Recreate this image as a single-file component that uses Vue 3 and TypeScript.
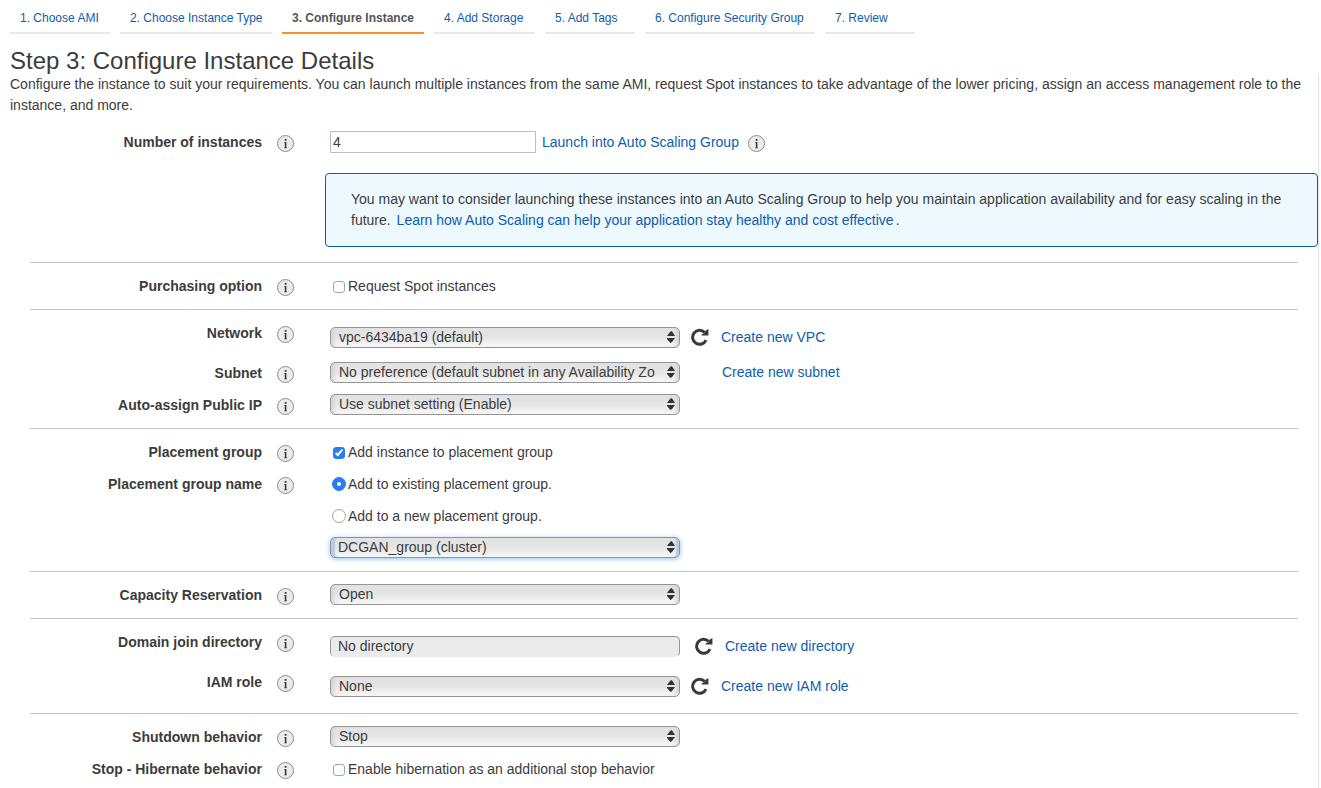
<script setup lang="ts">
import { ref } from 'vue'

interface Step {
  label: string
  width: number
}

interface Choice {
  kind: 'radio' | 'checkbox'
  text: string
  on: boolean
}

interface Row {
  id: string
  label: string
  tall?: boolean
  choices?: Choice[]
  select?: string
  focused?: boolean
  disabled?: boolean
  refresh?: boolean
  link?: string
}

const steps: Step[] = [
  { label: '1. Choose AMI', width: 100 },
  { label: '2. Choose Instance Type', width: 152 },
  { label: '3. Configure Instance', width: 142 },
  { label: '4. Add Storage', width: 101 },
  { label: '5. Add Tags', width: 90 },
  { label: '6. Configure Security Group', width: 170 },
  { label: '7. Review', width: 90 },
]
const current = 2
const count = ref('4')

const infoGlyph = 'M7.7 4h1.8v1.8H7.7zM7.2 7h2.2v5.6h.6v.7H7.2v-.7h.6V7.7h-.6z'

const sections: Row[][] = [
  [
    {
      id: 'purchasing',
      label: 'Purchasing option',
      choices: [{ kind: 'checkbox', text: 'Request Spot instances', on: false }],
    },
  ],
  [
    { id: 'network', label: 'Network', tall: true, select: 'vpc-6434ba19 (default)', refresh: true, link: 'Create new VPC' },
    { id: 'subnet', label: 'Subnet', select: 'No preference (default subnet in any Availability Zo', link: 'Create new subnet' },
    { id: 'public-ip', label: 'Auto-assign Public IP', select: 'Use subnet setting (Enable)' },
  ],
  [
    {
      id: 'placement',
      label: 'Placement group',
      choices: [{ kind: 'checkbox', text: 'Add instance to placement group', on: true }],
    },
    {
      id: 'placement-name',
      label: 'Placement group name',
      choices: [
        { kind: 'radio', text: 'Add to existing placement group.', on: true },
        { kind: 'radio', text: 'Add to a new placement group.', on: false },
      ],
      select: 'DCGAN_group (cluster)',
      focused: true,
    },
  ],
  [{ id: 'capacity', label: 'Capacity Reservation', select: 'Open' }],
  [
    { id: 'directory', label: 'Domain join directory', tall: true, select: 'No directory', disabled: true, refresh: true, link: 'Create new directory' },
    { id: 'iam', label: 'IAM role', tall: true, select: 'None', refresh: true, link: 'Create new IAM role' },
  ],
  [
    { id: 'shutdown', label: 'Shutdown behavior', select: 'Stop' },
    {
      id: 'hibernate',
      label: 'Stop - Hibernate behavior',
      choices: [{ kind: 'checkbox', text: 'Enable hibernation as an additional stop behavior', on: false }],
    },
  ],
]
</script>

<template>
  <div class="page">
    <nav class="steps" aria-label="Launch steps">
      <a
        v-for="(step, i) in steps"
        :key="step.label"
        href="#"
        class="step"
        :class="{ current: i === current }"
        :aria-current="i === current ? 'step' : undefined"
        :style="{ width: step.width + 'px' }"
      >{{ step.label }}</a>
    </nav>
    <h1>Step 3: Configure Instance Details</h1>

    <main class="panel">
      <p class="intro">
        Configure the instance to suit your requirements. You can launch multiple instances from the same AMI, request Spot
        instances to take advantage of the lower pricing, assign an access management role to the instance, and more.
      </p>

      <div class="row first">
        <label class="name" for="count">Number of instances</label>
        <button class="info" type="button" aria-label="About number of instances">
          <svg viewBox="0 0 17 17"><circle cx="8.5" cy="8.5" r="8" /><path :d="infoGlyph" /></svg>
        </button>
        <div class="fields">
          <div class="line">
            <input id="count" v-model="count" class="count" type="text" />
            <a href="#" class="scaling">Launch into Auto Scaling Group</a>
            <button class="info" type="button" aria-label="About Auto Scaling groups">
              <svg viewBox="0 0 17 17"><circle cx="8.5" cy="8.5" r="8" /><path :d="infoGlyph" /></svg>
            </button>
          </div>
        </div>
      </div>

      <aside class="notice">
        You may want to consider launching these instances into an Auto Scaling Group to help you maintain application
        availability and for easy scaling in the future.
        <a href="#">Learn how Auto Scaling can help your application stay healthy and cost effective</a>.
      </aside>

      <section v-for="(rows, s) in sections" :key="s" class="group">
        <div v-for="row in rows" :key="row.id" class="row" :class="{ tall: row.tall }">
          <label class="name" :for="row.select ? row.id : row.id + '-0'">{{ row.label }}</label>
          <button class="info" type="button" :aria-label="'About ' + row.label">
            <svg viewBox="0 0 17 17"><circle cx="8.5" cy="8.5" r="8" /><path :d="infoGlyph" /></svg>
          </button>
          <div class="fields">
            <label v-for="(choice, c) in row.choices" :key="choice.text" class="choice">
              <input :id="row.id + '-' + c" :type="choice.kind" :name="row.id" :checked="choice.on" />
              <span>{{ choice.text }}</span>
            </label>
            <div v-if="row.select" class="line">
              <div class="picker" :class="{ focused: row.focused, disabled: row.disabled }">
                <select :id="row.id" :disabled="row.disabled">
                  <option>{{ row.select }}</option>
                </select>
                <svg v-if="!row.disabled" class="arrows" viewBox="0 0 8 14" aria-hidden="true">
                  <path d="M4.5 1 5.5 2 8 6H0L3 2zM0 8h8L5 12 3.5 13 2.5 12 0 9z" />
                </svg>
              </div>
              <button v-if="row.refresh" class="refresh" :class="{ apart: row.disabled }" type="button" aria-label="Refresh">
                <svg viewBox="0 0 18 18">
                  <path class="ring" d="M13.6 4.4A7 7 0 1 0 15 12.2" />
                  <path d="M14.8 2.6 17.4 1v6.6h-6.8V6.4l2.4-1.2z" />
                </svg>
              </button>
              <a v-if="row.link" href="#" class="create" :class="{ alone: !row.refresh }">{{ row.link }}</a>
            </div>
          </div>
        </div>
      </section>
    </main>
  </div>
</template>

<style>
body {
  margin: 0;
  background: #fff;
}
</style>

<style scoped>
.page {
  box-sizing: border-box;
  min-height: 100vh;
  display: flex;
  flex-direction: column;
  padding: 0 2px 0 10px;
  color: #3c3c3c;
  font: 14px/21px "Liberation Sans", Arial, sans-serif;
}
a {
  color: #0f5cad;
  text-decoration: none;
}
.steps {
  display: flex;
  gap: 10px;
}
.step {
  box-sizing: border-box;
  padding: 7px 0 3px 10px;
  border-bottom: 2px solid #e8e8e8;
  font-size: 12px;
  line-height: 22px;
  white-space: nowrap;
}
.step.current {
  border-color: #fa8f28;
  color: #555;
  font-weight: bold;
}
h1 {
  margin: 14px 0 0;
  font-size: 24px;
  font-weight: normal;
  line-height: 26px;
}
.panel {
  flex: 1;
  border-right: 1px solid #e2e2e2;
}
.intro {
  margin: 0 0 15px;
}
.row {
  display: flex;
  align-items: flex-start;
  min-height: 22px;
  line-height: 22px;
}
.row + .row {
  margin-top: 10px;
}
.row.first {
  margin: 0 20px;
}
.name {
  width: 232px;
  flex: none;
  text-align: right;
  font-weight: bold;
}
.info,
.refresh {
  flex: none;
  padding: 0;
  border: 0;
  background: none;
}
.info {
  width: 17px;
  height: 17px;
  margin: 4px 0 0 15px;
}
.refresh {
  width: 18px;
  height: 18px;
  margin: 1px 0 0 11px;
}
.info svg,
.refresh svg {
  display: block;
  width: 100%;
  height: 100%;
}
.info circle {
  fill: #ebebeb;
  stroke: #8c8c8c;
}
.info path,
.refresh path {
  fill: #3a3a3a;
}
.refresh .ring {
  fill: none;
  stroke: #3a3a3a;
  stroke-width: 3;
}
.fields {
  flex: 1;
  display: flex;
  flex-direction: column;
  gap: 10px;
  margin-left: 36px;
}
.line {
  display: flex;
  align-items: flex-start;
  height: 22px;
}
.count {
  box-sizing: border-box;
  width: 206px;
  height: 22px;
  padding: 0 2px;
  border: 1px solid #bdbdbd;
  color: inherit;
  font: inherit;
}
.scaling {
  margin-left: 6px;
}
.line .info {
  margin-left: 9px;
}
.notice {
  margin: 20px 0 15px 315px;
  padding: 15px 25px;
  border: 1px solid #0f5cad;
  border-radius: 4px;
  background: #edf8ff;
}
.notice a {
  margin: 0 2px;
}
.group {
  margin: 0 20px;
  padding: 12px 0;
  border-top: 1px solid #c3c3c3;
}
.tall {
  min-height: 30px;
}
.tall .line {
  margin-top: 5px;
}
.choice {
  display: flex;
  align-items: center;
  height: 22px;
}
.choice input {
  appearance: none;
  box-sizing: border-box;
  flex: none;
  width: 12px;
  height: 12px;
  margin: 1px 3px 0;
  border: 1px solid #a6a6a6;
  border-radius: 3px;
  background: #fff;
}
.choice input[type="radio"] {
  width: 14px;
  height: 14px;
  margin: 0 2px;
  border-radius: 50%;
}
.choice input:checked {
  border-color: #2a7bf6;
  background: #2a7bf6;
}
.choice input[type="checkbox"]:checked::before {
  content: "";
  display: block;
  box-sizing: border-box;
  width: 4px;
  height: 8px;
  margin: 0 3px;
  border: solid #fff;
  border-width: 0 2px 2px 0;
  transform: rotate(40deg);
}
.choice input[type="radio"]:checked::before {
  content: "";
  display: block;
  width: 4px;
  height: 4px;
  margin: 4px;
  border-radius: 50%;
  background: #fff;
}
.picker {
  position: relative;
  flex: none;
  width: 350px;
  height: 21px;
}
select {
  appearance: none;
  box-sizing: border-box;
  display: block;
  width: 100%;
  height: 21px;
  padding: 0 22px 0 8px;
  border: 1px solid #969696;
  border-radius: 5px;
  background: linear-gradient(#e2e2e2, #e5e5e5 50%, #f8f8f8);
  box-shadow: inset 5px 0 4px -3px #d0d0d0, inset -5px 0 4px -3px #d0d0d0;
  color: inherit;
  font: inherit;
  line-height: 19px;
  opacity: 1;
}
.focused select {
  padding-left: 7px;
  border-color: #8796a5;
  box-shadow: inset 5px 0 1px -1px #bccbdc, inset -4px 0 1px -1px #bccbdc, 0 1px 5px #8fc0ee;
}
.disabled select {
  padding-left: 7px;
  border-bottom-color: #ebebeb;
  background: #ebebeb;
  box-shadow: none;
}
.arrows {
  position: absolute;
  top: 3px;
  right: 5px;
  width: 8px;
  height: 14px;
  fill: #333;
  pointer-events: none;
}
.refresh.apart {
  margin-left: 15px;
}
.create {
  margin-left: 12px;
  line-height: 21px;
}
.create.alone {
  margin-left: 42px;
}
</style>
